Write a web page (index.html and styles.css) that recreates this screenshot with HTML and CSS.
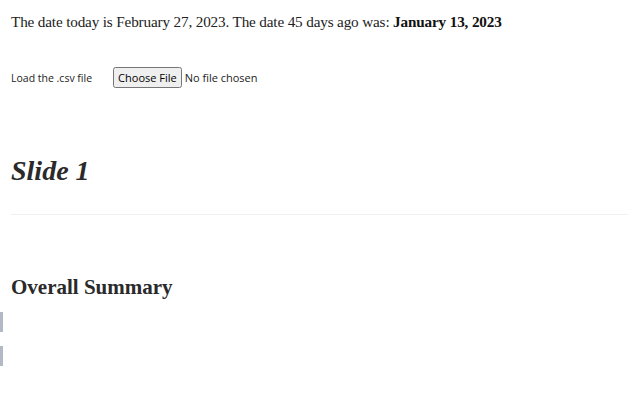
FILE: index.html
```html
<!DOCTYPE html>
<html>
<head>
<meta charset="utf-8">
<link rel="stylesheet" href="styles.css">
</head>
<body>
<div class="page">
  <p class="date">The date today is February 27, 2023. The date 45 days ago was: <strong>January 13, 2023</strong></p>
  <div class="loader">
    <label class="load-label" for="csv">Load the .csv file</label>
    <input class="file" id="csv" type="file">
  </div>
  <h1 class="slide">Slide 1</h1>
  <hr class="rule">
  <h2 class="summary">Overall Summary</h2>
</div>
<div class="bars">
  <div class="bar"></div>
  <div class="bar"></div>
</div>
</body>
</html>
```
FILE: styles.css
```css
html, body {
  margin: 0;
  padding: 0;
  background: #fff;
}
.page {
  padding: 0 12px 0 11px;
  color: #222;
}
.date {
  margin: 0;
  padding-top: 12px;
  font-family: "Liberation Serif", serif;
  font-size: 15.2px;
  letter-spacing: -0.15px;
  line-height: 20px;
  color: #222;
}
.date strong {
  color: #111;
}
.loader {
  display: flex;
  align-items: center;
  gap: 21px;
  margin-top: 35px;
  font-family: "Open Sans", sans-serif;
  font-size: 10.5px;
}
.load-label {
  color: #222;
}
.file {
  font-family: "Open Sans", sans-serif;
  font-size: 11px;
  color: #222;
}
.file::file-selector-button {
  font-family: "Open Sans", sans-serif;
  font-size: 11px;
  padding: 1px 3px;
  margin-right: 3px;
}
.slide {
  margin: 66px 0 0;
  font-family: "Liberation Serif", serif;
  font-style: italic;
  font-weight: 700;
  font-size: 28px;
  line-height: 34px;
  color: #2a2a2a;
}
.rule {
  margin: 26px 0 0;
  border: 0;
  border-top: 1px solid #f0f0f0;
}
.summary {
  margin: 58px 0 0;
  font-family: "Liberation Serif", serif;
  font-weight: 700;
  font-size: 21px;
  line-height: 28px;
  color: #2a2a2a;
}
.bars {
  display: flex;
  flex-direction: column;
  gap: 14px;
  margin-top: 11px;
}
.bar {
  width: 3px;
  height: 20px;
  background: #b3b8c7;
}
```
